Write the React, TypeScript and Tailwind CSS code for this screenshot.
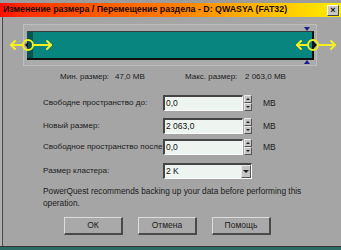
import React from "react";

const font = { fontFamily: '"Liberation Sans", Arial, sans-serif' };

function Spinner() {
	return (
		<div className="flex flex-col w-[8px] h-[16px] ml-[1px]">
			<div className="flex-1 bg-[#c4c4c4] border-t border-l border-[#e8e8e8] border-b border-r border-b-[#555] border-r-[#555] flex items-center justify-center">
				<div className="w-0 h-0 border-l-[2px] border-r-[2px] border-b-[2px] border-l-transparent border-r-transparent border-b-[#222]" />
			</div>
			<div className="flex-1 bg-[#c4c4c4] border-t border-l border-[#e8e8e8] border-b border-r border-b-[#555] border-r-[#555] flex items-center justify-center">
				<div className="w-0 h-0 border-l-[2px] border-r-[2px] border-t-[2px] border-l-transparent border-r-transparent border-t-[#222]" />
			</div>
		</div>
	);
}

function Field({ label, value, mt }: { label: string; value: string; mt: string }) {
	return (
		<div className={`flex items-center h-[16px] ${mt}`}>
			<div className="w-[160px] pl-[40px] text-[8.1px] text-[#1b1b1b] whitespace-nowrap">
				{label}
			</div>
			<div className="w-[80px] h-[16px] bg-[#eef5f0] border-t-2 border-l-2 border-t-[#444] border-l-[#444] border-b border-r border-b-white border-r-white text-[8.5px] text-[#111] leading-[12px] pl-[1px]">
				{value}
			</div>
			<Spinner />
			<div className="ml-[11px] text-[8.5px] text-[#1b1b1b]">MB</div>
		</div>
	);
}

function Btn({ text, ml }: { text: string; ml: string }) {
	return (
		<div
			className={`${ml} w-[59px] h-[18px] bg-[#a9a9a9] border-t border-l border-t-[#dcdcdc] border-l-[#dcdcdc] border-b-2 border-r-2 border-b-[#4a4a4a] border-r-[#4a4a4a] flex items-center justify-center text-[8.5px] text-[#1b1b1b]`}
		>
			{text}
		</div>
	);
}

export default function App() {
	return (
		<div className="relative w-[341px] h-[250px] overflow-hidden bg-[#a5a5a5]" style={font}>
			<div className="h-[3px] bg-[#9c9c9c]" />
			{/* title bar */}
			<div className="h-[14px] flex items-center justify-between bg-gradient-to-r from-[#ff0a00] via-[#ff7a00] to-[#ffee00]">
				<span className="pl-[3px] text-[8.8px] font-bold text-[#1a0a00] whitespace-nowrap">
					Изменение размера / Перемещение раздела - D: QWASYA (FAT32)
				</span>
				<div className="mr-[2px] w-[12px] h-[11px] bg-[#c8c8c8] border-t border-l border-white border-b border-r border-b-[#444] border-r-[#444] flex items-center justify-center text-[9px] font-bold leading-none text-[#111]">
					×
				</div>
			</div>

			<div className="flex h-[229px]">
				<div className="w-[3px] bg-[#b0b0b0] border-r border-[#4a4a4a]" />
				<div className="flex-1 flex flex-col">
					{/* partition bar */}
					<div className="mt-[7px] ml-[20px] w-[294px] h-[42px] bg-[#ababab] border border-[#bdbdbd] pt-[6px] pl-[3px]">
						<div className="w-[287px] h-[29px] flex bg-[#08857f] border-t border-[#3a3a3a] border-b-2 border-b-[#111] border-r-2 border-r-[#111]">
							<div className="w-[6px] bg-[#04544f]" />
						</div>
					</div>

					{/* min / max */}
					<div className="mt-[5px] h-[12px] flex items-center text-[8px] text-[#1b1b1b] whitespace-nowrap">
						<span className="ml-[57px] w-[55px]">Мин. размер:</span>
						<span className="w-[70px]">47,0 MB</span>
						<span className="w-[60px]">Макс. размер:</span>
						<span>2 063,0 MB</span>
					</div>

					<Field label="Свободне пространство до:" value="0,0" mt="mt-[12px]" />
					<Field label="Новый размер:" value="2 063,0" mt="mt-[7px]" />
					<Field label="Свободное пространство после" value="0,0" mt="mt-[5px]" />

					{/* cluster size */}
					<div className="flex items-center h-[16px] mt-[8px]">
						<div className="w-[160px] pl-[40px] text-[8.1px] text-[#1b1b1b] whitespace-nowrap">
							Размер кластера:
						</div>
						<div className="w-[89px] h-[16px] flex bg-[#eef5f0] border-t-2 border-l-2 border-t-[#444] border-l-[#444] border-b border-r border-b-white border-r-white">
							<span className="flex-1 text-[8.5px] text-[#111] leading-[12px] pl-[1px]">2 K</span>
							<div className="w-[10px] bg-[#c4c4c4] border-t border-l border-[#e8e8e8] border-b border-r border-b-[#555] border-r-[#555] flex items-center justify-center">
								<div className="w-0 h-0 border-l-[3px] border-r-[3px] border-t-[3px] border-l-transparent border-r-transparent border-t-[#222]" />
							</div>
						</div>
					</div>

					<div className="mt-[6px] ml-[40px] w-[262px] text-[8.3px] leading-[12px] text-[#1b1b1b]">
						PowerQuest recommends backing up your data before performing this operation.
					</div>

					<div className="mt-[8px] flex">
						<Btn text="ОК" ml="ml-[61px]" />
						<Btn text="Отмена" ml="ml-[15px]" />
						<Btn text="Помощь" ml="ml-[15px]" />
					</div>
				</div>
			</div>

			<div className="h-[4px] bg-[#2d6b66] border-t border-[#333]" />

			{/* handles and drag arrows */}
			<svg className="absolute left-0 top-0 pointer-events-none" width="341" height="250">
				<polygon points="304,27 310,27 307,31" fill="#1c1c8c" />
				<polygon points="304,64 310,64 307,60" fill="#1c1c8c" />
				<polygon points="28,42 28,48 25,45" fill="#111" />
				<polygon points="314,42 314,48 317,45" fill="#111" />
				<g stroke="#f5f020" strokeWidth="2" fill="none" strokeLinecap="round" strokeLinejoin="round">
					<circle cx="28" cy="45" r="5" />
					<line x1="11" y1="45" x2="23" y2="45" />
					<polyline points="15,41 11,45 15,49" />
					<line x1="33" y1="45" x2="51" y2="45" />
					<polyline points="47,41 51,45 47,49" />
					<circle cx="313" cy="45" r="5" />
					<line x1="297" y1="45" x2="308" y2="45" />
					<polyline points="301,41 297,45 301,49" />
					<line x1="318" y1="45" x2="335" y2="45" />
					<polyline points="331,41 335,45 331,49" />
				</g>
			</svg>
		</div>
	);
}
